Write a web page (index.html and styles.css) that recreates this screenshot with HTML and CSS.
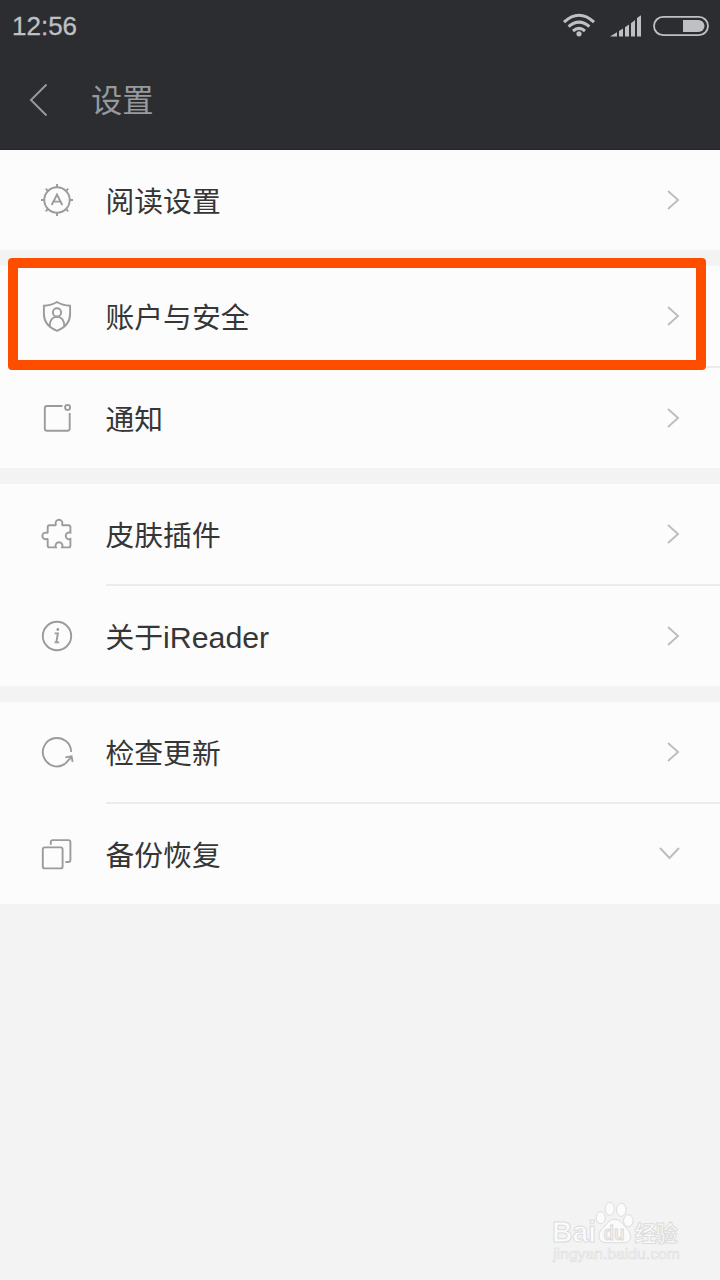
FILE: index.html
```html
<!DOCTYPE html>
<html lang="zh-CN">
<head>
<meta charset="utf-8">
<title>设置</title>
<link rel="stylesheet" href="styles.css">
</head>
<body>
<div class="screen">
  <header class="header">
    <div class="status">
      <span class="time">12:56</span>
      <div class="indicators">
        <svg class="wifi" width="34" height="26" viewBox="0 0 34 26">
          <path d="M2 9.2Q17 -4.6 32 9.2M6.6 13.7Q17 4.5 27.4 13.7M11 18Q17 12.8 23 18"/>
          <circle cx="17" cy="20.8" r="2.6"/>
        </svg>
        <svg class="signal" width="32" height="22" viewBox="0 0 32 22">
          <path d="M0 21.5L7 17.3V21.5ZM9 16L13 13.6V21.5H9ZM15 12.3L19 9.6V21.5H15ZM21 8.3L25 5V21.5H21ZM27 3L31 .3V21.5H27Z"/>
        </svg>
        <svg class="battery" width="58" height="22" viewBox="0 0 58 22">
          <rect x="2" y="1.8" width="54" height="18.4" rx="9.2"/>
          <path d="M31 5H46.5A6 6 0 0 1 46.5 17H31Z"/>
        </svg>
      </div>
    </div>
    <div class="titlebar">
      <svg class="back" width="20" height="34" viewBox="0 0 20 34"><path d="M17.5 1.5L2 17L17.5 32.5"/></svg>
      <h1 class="title">设置</h1>
    </div>
  </header>

  <main class="groups">
    <section class="group">
      <div class="row">
        <svg class="icon" viewBox="-17 -17 34 34"><circle r="12.7"/><path d="M0 -16V-13M0 13V16M-16 0H-13M13 0H16M-11.3 -11.3L-9.2 -9.2M11.3 -11.3L9.2 -9.2M-11.3 11.3L-9.2 9.2M11.3 11.3L9.2 9.2"/><path d="M-5.3 5L0 -5.5L5.3 5M-3.2 1.6H3.2"/></svg>
        <span class="label">阅读设置</span>
        <svg class="chevron" viewBox="0 0 14 22"><path d="M2 2L12 11L2 20"/></svg>
      </div>
    </section>

    <section class="group">
      <div class="row">
        <svg class="icon" viewBox="-17 -17 34 34"><path d="M0 -14C-4 -11.5 -8.5 -10.5 -13.1 -10.3V-2C-13.1 7 -7 12 0 14.8C7 12 13.1 7 13.1 -2V-10.3C8.5 -10.5 4 -11.5 0 -14Z"/><circle cy="-3.6" r="4.1"/><path d="M-7.3 10.6C-7.3 4.5 -4.5 .9 0 .9S7.3 4.5 7.3 10.6"/></svg>
        <span class="label">账户与安全</span>
        <svg class="chevron" viewBox="0 0 14 22"><path d="M2 2L12 11L2 20"/></svg>
      </div>
      <div class="row divided">
        <svg class="icon" viewBox="-17 -17 34 34"><path d="M5.5 -12H-10Q-12.2 -12 -12.2 -9.8V10.5Q-12.2 12.7 -10 12.7H10.5Q12.7 12.7 12.7 10.5V-5"/><circle cx="10.6" cy="-10.6" r="2.5"/></svg>
        <span class="label">通知</span>
        <svg class="chevron" viewBox="0 0 14 22"><path d="M2 2L12 11L2 20"/></svg>
      </div>
    </section>

    <section class="group">
      <div class="row">
        <svg class="icon" viewBox="-17 -17 34 34"><path d="M-7.3 -8.8H-1.8C-1.2 -8.8 -1 -9.3 -1.3 -10.1A3.4 3.4 0 1 1 5.3 -10.1C5 -9.3 5.2 -8.8 5.8 -8.8H11.5Q13.4 -8.8 13.4 -6.9V-1.3A3.4 3.4 0 1 0 13.4 5V11.5Q13.4 13.4 11.5 13.4H5.1A3.5 3.5 0 1 0 -1.1 13.4H-7.3Q-9.3 13.4 -9.3 11.4V5.5C-9.3 4.9 -9.8 4.8 -10.5 5.1A3.3 3.3 0 1 1 -10.5 -1.3C-9.8 -1 -9.3 -1.2 -9.3 -1.8V-6.8Q-9.3 -8.8 -7.3 -8.8Z"/></svg>
        <span class="label">皮肤插件</span>
        <svg class="chevron" viewBox="0 0 14 22"><path d="M2 2L12 11L2 20"/></svg>
      </div>
      <div class="row divided">
        <svg class="icon" viewBox="-17 -17 34 34"><circle r="14.2"/><path d="M-2.4 -2.6H.9L-.7 6.4H2.2M-2.4 6.4H-.7"/><circle class="dot" cx=".8" cy="-6.5" r="1.4"/></svg>
        <span class="label mixed">关于<span class="latin">iReader</span></span>
        <svg class="chevron" viewBox="0 0 14 22"><path d="M2 2L12 11L2 20"/></svg>
      </div>
    </section>

    <section class="group">
      <div class="row">
        <svg class="icon" viewBox="-17 -17 34 34"><path d="M14.2 0A14.2 14.2 0 1 0 8 11.9"/><path d="M8 11.9L14.6 4.8M8.4 5.4L14.6 4.4L15.6 9.8"/></svg>
        <span class="label">检查更新</span>
        <svg class="chevron" viewBox="0 0 14 22"><path d="M2 2L12 11L2 20"/></svg>
      </div>
      <div class="row divided">
        <svg class="icon" viewBox="-17 -17 34 34"><rect x="-14.2" y="-6.6" width="19.8" height="21" rx="2"/><path d="M-6.2 -9.2V-11.9Q-6.2 -13.9 -4.2 -13.9H11.4Q13.4 -13.9 13.4 -11.9V6Q13.4 8 11.4 8H8.4"/></svg>
        <span class="label">备份恢复</span>
        <svg class="chevron down" viewBox="0 0 22 14"><path d="M2 2L11.5 12L21 2"/></svg>
      </div>
    </section>
  </main>

  <div class="highlight"></div>

  <svg class="watermark" width="140" height="70" viewBox="0 0 140 70">
    <g class="mark">
      <text class="brand" x="0" y="42" textLength="44" lengthAdjust="spacingAndGlyphs">Bai</text>
      <ellipse cx="48.7" cy="17.7" rx="4.6" ry="6"/>
      <ellipse cx="57.7" cy="8.8" rx="4.6" ry="6.4"/>
      <ellipse cx="69.3" cy="9.8" rx="4.8" ry="6.6"/>
      <ellipse cx="76.3" cy="20.7" rx="4.8" ry="6"/>
      <path d="M63 19.3C69 19.3 71 25 75 29C80 34 80 42.7 72 42.7H54C46 42.7 45 34 50 29C55 25 56 19.3 63 19.3Z"/>
      <text class="cn" x="82.5" y="40.5" textLength="43">经验</text>
    </g>
    <text class="du" x="51.5" y="40" textLength="21" lengthAdjust="spacingAndGlyphs">du</text>
    <text class="site" x="1" y="59" textLength="127" lengthAdjust="spacingAndGlyphs">jingyan.baidu.com</text>
  </svg>
</div>
</body>
</html>
```

FILE: styles.css
```css
* { box-sizing: border-box; }

body {
  margin: 0;
  background: #f3f3f3;
  font-family: "Liberation Sans", "Noto Sans CJK SC", sans-serif;
}

.screen {
  position: relative;
  height: 1280px;
  overflow: hidden;
}

.header {
  height: 150px;
  background: #2c2d31;
  border-bottom: 1px solid #242529;
}

.status {
  display: flex;
  justify-content: space-between;
  align-items: center;
  height: 50px;
  padding: 0 11px 0 12px;
}

.time {
  padding-top: 1px;
  color: #bfc0c3;
  -webkit-text-stroke: .3px #bfc0c3;
  font-size: 26px;
  line-height: 32px;
}

.indicators { display: flex; align-items: center; padding-top: 1px; }

.wifi { margin-right: 14px; }
.wifi path { fill: none; stroke: #bfc0c3; stroke-width: 3; }
.wifi circle, .signal path, .battery path { fill: #bfc0c3; }
.signal { margin-right: 10px; }
.battery { margin-right: -1px; }
.battery rect { fill: none; stroke: #bfc0c3; stroke-width: 1.8; }

.titlebar {
  display: flex;
  align-items: center;
  height: 100px;
  padding-left: 29px;
}

.back path { fill: none; stroke: #97989a; stroke-width: 2; }

.title {
  margin: 0 0 2px 42px;
  color: #98999c;
  font-family: "Noto Sans CJK SC", sans-serif;
  font-size: 31.3px;
  font-weight: 400;
  line-height: 40px;
}

.groups {
  display: flex;
  flex-direction: column;
  gap: 16px;
}

.group { background: #fcfcfc; }

.row {
  display: flex;
  align-items: center;
  height: 100px;
  padding: 0 40px;
}

.divided {
  height: 102px;
  padding-top: 2px;
  background: linear-gradient(#ebebeb, #ebebeb) 106px 0 / 100% 2px no-repeat;
}

.icon {
  width: 34px;
  height: 34px;
  fill: none;
  stroke: #9b9b9b;
  stroke-width: 1.9;
}

.icon .dot { fill: #9b9b9b; stroke: none; }

.label {
  flex: 1;
  margin-left: 31.5px;
  color: #363636;
  font-family: "Noto Sans CJK SC", sans-serif;
  font-size: 28.8px;
  line-height: 40px;
}

.mixed { padding-top: 2px; }

.latin {
  font-family: "Liberation Sans", sans-serif;
  font-size: 30.3px;
}

.chevron {
  width: 14px;
  height: 22px;
  fill: none;
  stroke: #bdbdbd;
  stroke-width: 1.9;
}

.down { width: 22px; height: 14px; margin-bottom: 2px; }

.highlight {
  position: absolute;
  left: 8px;
  top: 258px;
  width: 698px;
  height: 112px;
  border: 10px solid #ff4d00;
  border-radius: 4px;
}

.watermark {
  position: absolute;
  left: 552px;
  top: 1200px;
}

.mark { fill: #fbfbfb; stroke: #dcdcdc; stroke-width: 1; }
.brand { font: bold 29px "Liberation Sans", sans-serif; }
.cn { font: bold 22px "Noto Sans CJK SC", sans-serif; }
.du { fill: #efefef; stroke: #d8d8d8; stroke-width: .9; font: bold 21px "Liberation Sans", sans-serif; }
.site { fill: #f8f8f8; stroke: #dedede; stroke-width: .6; font: 14px "Liberation Sans", sans-serif; }
```
